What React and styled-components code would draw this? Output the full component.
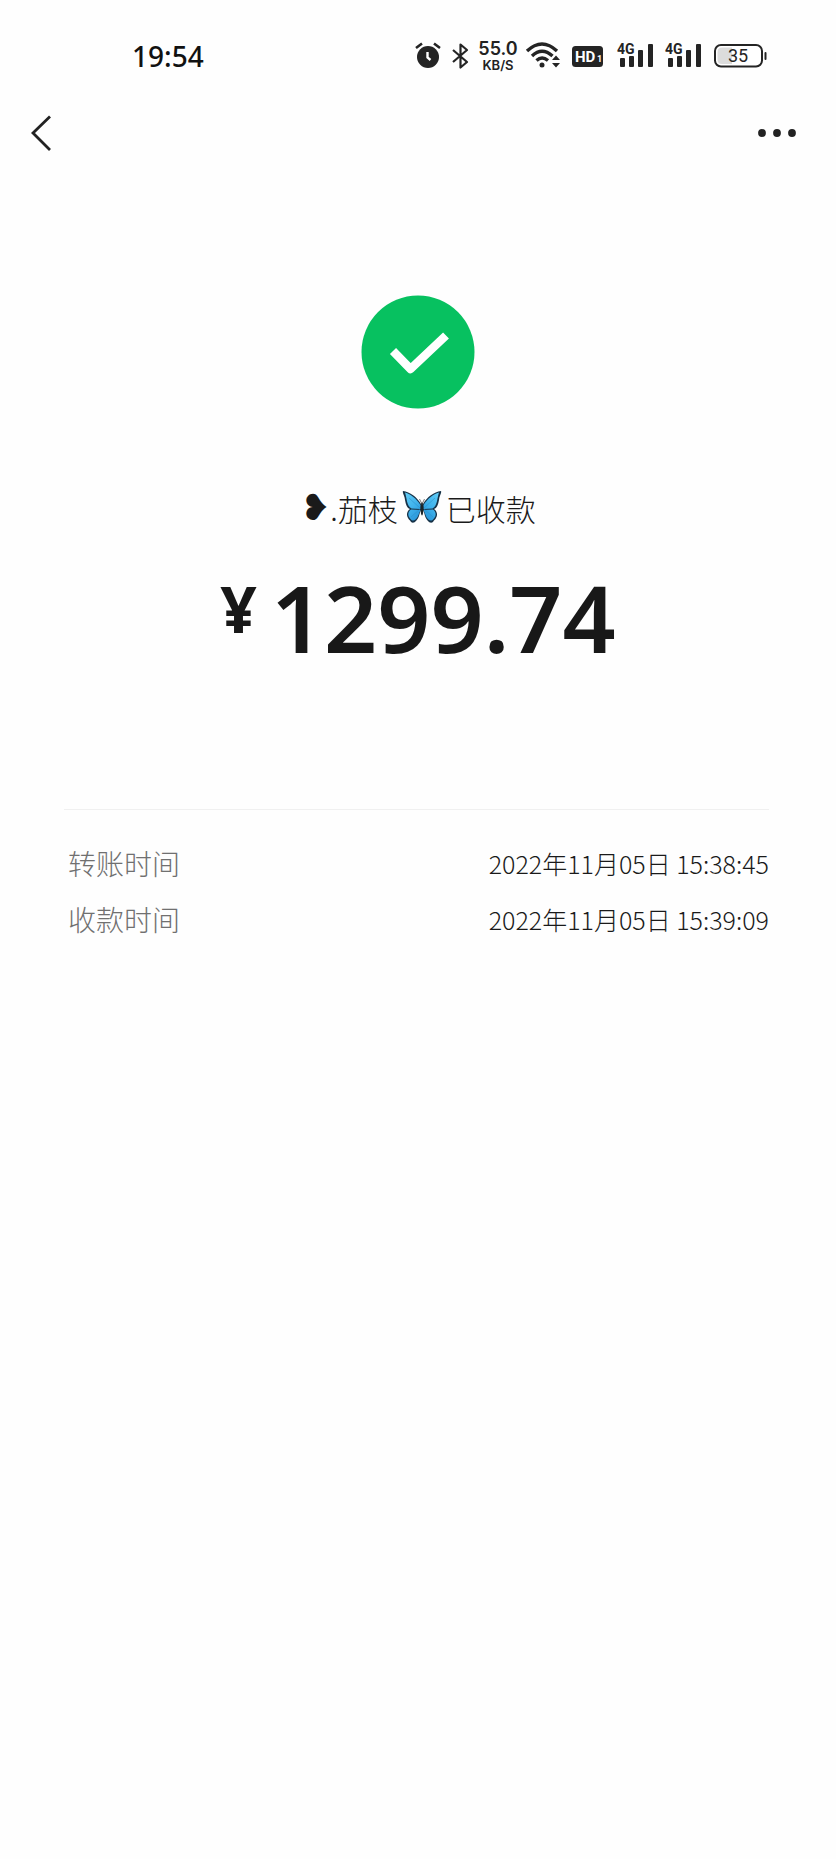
import React from 'react';
import styled, { createGlobalStyle } from 'styled-components';

const GlobalStyle = createGlobalStyle`
  * { box-sizing: border-box; }
  body {
    margin: 0;
    background: #fefefe;
    color: #1a1a1a;
    font-family: "Noto Sans CJK SC", sans-serif;
  }
`;

const Page = styled.div`
  min-height: 100vh;
  display: flex;
  flex-direction: column;
`;

const StatusBar = styled.header`
  display: flex;
  align-items: center;
  justify-content: space-between;
  height: 80px;
  padding: 32px 69px 0 132px;
`;

const Clock = styled.time`
  font: 500 28px/32px "Noto Sans", sans-serif;
  color: #111;
`;

const StatusIcons = styled.div`
  display: flex;
  align-items: center;
  gap: 10px;
`;

const StatusIcon = styled.svg`
  display: block;
  height: 32px;
  color: #242424;
  overflow: visible;
`;

const Speed = styled.div`
  width: 38px;
  display: flex;
  flex-direction: column;
  align-items: center;
  font-family: Inter, sans-serif;
  font-weight: 600;
  color: #222;
`;

const SpeedValue = styled.span`
  font-size: 18px;
  line-height: 18px;
`;

const SpeedUnit = styled.span`
  font-size: 13px;
  line-height: 14px;
`;

const NavBar = styled.nav`
  display: flex;
  align-items: center;
  justify-content: space-between;
  height: 106px;
  padding: 0 37px 0 28px;
`;

const NavButton = styled.button`
  display: flex;
  padding: 0;
  border: 0;
  background: none;
  color: #222;
`;

const Result = styled.main`
  display: flex;
  flex-direction: column;
  align-items: center;
  padding-top: 109px;
`;

const Receiver = styled.p`
  display: flex;
  align-items: center;
  gap: 4px;
  margin: 75px 0 0;
  font-size: 30px;
  font-weight: 300;
  line-height: 48px;
`;

const Bullet = styled.span`
  font-family: "DejaVu Sans", sans-serif;
  font-size: 36px;
  font-weight: 400;
  line-height: 40px;
`;

const Name = styled.span`
  display: flex;
  align-items: center;
`;

const Amount = styled.p`
  display: flex;
  align-items: flex-start;
  gap: 14px;
  margin: 35px 0 0;
  font: 600 93px/100px "Noto Sans", sans-serif;
  color: #181818;
`;

const Currency = styled.span`
  font-size: 64px;
  font-weight: 700;
  line-height: 84px;
`;

const Details = styled.dl`
  margin: 142px 67px 0 64px;
  padding: 25px 0 0 4px;
  border-top: 1px solid #f0f0f0;
`;

const DetailRow = styled.div`
  display: flex;
  align-items: center;
  justify-content: space-between;
  height: 56px;
`;

const Label = styled.dt`
  font-size: 28px;
  font-weight: 300;
  color: #707070;
`;

const Value = styled.dd`
  margin: 0;
  font-size: 25px;
  font-weight: 300;
  color: #1a1a1a;
`;

const AlarmIcon = () => (
  <StatusIcon width="26" viewBox="0 0 26 32">
    <circle cx="13" cy="17" r="11" fill="currentColor" />
    <path d="M1 8 L7 3.500 M25 8 L19 3.500" stroke="currentColor" strokeWidth="2.6" />
    <path d="M12.5 12 V17.5 L15.5 20" stroke="#fff" strokeWidth="2.4" fill="none" />
  </StatusIcon>
);

const BluetoothIcon = () => (
  <StatusIcon width="18" viewBox="0 0 18 32">
    <path
      d="M2 10 L16 22 L9.5 27.5 V4.500 L16 10 L2 22"
      fill="none"
      stroke="currentColor"
      strokeWidth="2.2"
      strokeLinejoin="round"
    />
  </StatusIcon>
);

const WifiIcon = () => (
  <StatusIcon width="36" viewBox="0 0 36 32">
    <g fill="none" stroke="currentColor" strokeWidth="3.400">
      <path d="M0 11 Q15 -3 30 11" />
      <path d="M5 16 Q15 6.500 25.500 16" />
      <path d="M9.500 20.500 Q15 15.500 21 20.500" />
    </g>
    <circle cx="15" cy="25" r="2.500" fill="currentColor" />
    <path d="M25 20 L29 15.500 L33 20 Z M25 23 L29 27.500 L33 23 Z" fill="currentColor" />
  </StatusIcon>
);

const HdIcon = () => (
  <StatusIcon width="34" viewBox="0 0 34 32">
    <rect x="-1" y="6" width="31" height="21" rx="3.500" fill="currentColor" />
    <text x="2" y="22" fill="#fff" fontFamily="Roboto, sans-serif" fontWeight="700" fontSize="15">HD</text>
    <text x="24" y="22" fill="#fff" fontFamily="Roboto, sans-serif" fontWeight="700" fontSize="9">1</text>
  </StatusIcon>
);

const SignalIcon = () => (
  <StatusIcon width="38" viewBox="0 0 38 32">
    <text x="0" y="14" fill="currentColor" fontFamily="Roboto, sans-serif" fontWeight="700" fontSize="14">4G</text>
    <g fill="currentColor">
      <rect x="3" y="18" width="5" height="9" rx="1" />
      <rect x="12" y="16" width="5" height="11" rx="1" />
      <rect x="21" y="10" width="5" height="17" rx="1" />
      <rect x="31" y="4" width="5" height="23" rx="1" />
    </g>
  </StatusIcon>
);

const BatteryIcon = () => (
  <StatusIcon width="54" viewBox="0 0 54 32">
    <rect x="2" y="5" width="47" height="21.500" rx="6" fill="#fff" stroke="currentColor" strokeWidth="2" />
    <path d="M9 7.500 H19 V24 H9 Q4.500 24 4.500 19.500 V12 Q4.500 7.500 9 7.500 Z" fill="#dcdcdc" />
    <rect x="51.500" y="12" width="2" height="8" rx="1" fill="currentColor" />
    <text x="25" y="22" textAnchor="middle" fill="currentColor" fontFamily="Roboto, sans-serif" fontSize="18">35</text>
  </StatusIcon>
);

const BackIcon = () => (
  <svg width="28" height="40" viewBox="0 0 28 40">
    <path d="M22 3.500 L5 20 L22 37" fill="none" stroke="currentColor" strokeWidth="2.800" />
  </svg>
);

const MoreIcon = () => (
  <svg width="44" height="12" viewBox="0 0 44 12" fill="currentColor">
    <circle cx="7" cy="6" r="3.900" />
    <circle cx="22" cy="6" r="3.900" />
    <circle cx="37" cy="6" r="3.900" />
  </svg>
);

const SuccessIcon = () => (
  <svg width="114" height="114" viewBox="0 0 114 114" role="img" aria-label="成功">
    <circle cx="57" cy="57" r="56.500" fill="#07c160" />
    <path
      d="M32 56 L49.500 74 L85 40.500"
      fill="none"
      stroke="#fff"
      strokeWidth="8.500"
      strokeLinejoin="round"
    />
  </svg>
);

const Wing = () => (
  <>
    <path
      d="M19 14 C15 7 8 2 1 1 C0 3 3 6 3 10 C4 15 5 18 8 19 C5 21 4 25 6 28 C7 30 8 30 9 32 C12 34 15 31 17 26 Q18 22 19 20 Z"
      fill="#173247"
    />
    <path
      d="M18.500 15 C14 8 9 4.500 3 2.500 C5 8 4.500 16 9.500 18.500 L18.500 19 Z M18.500 20 L9 19.500 C5.500 22 5.500 26 8.500 29 C12 33 15.500 28 16.500 25 Z"
      fill="url(#wing)"
    />
    <path d="M18 18 L7 8 M18 19 L9 27" stroke="#2a8dc6" strokeWidth="0.500" />
  </>
);

const ButterflyIcon = () => (
  <svg width="40" height="36" viewBox="0 0 40 36" role="img" aria-label="蝴蝶">
    <defs>
      <linearGradient id="wing" x1="0" y1="0" x2="0.600" y2="1">
        <stop offset="0" stopColor="#62cdf6" />
        <stop offset="0.600" stopColor="#3fb2ec" />
        <stop offset="1" stopColor="#2b98da" />
      </linearGradient>
    </defs>
    <Wing />
    <g transform="translate(40 0) scale(-1 1)">
      <Wing />
    </g>
    <path d="M20 14 L17.500 9 M20 14 L22.500 9" stroke="#222" strokeWidth="0.600" />
    <ellipse cx="20" cy="19" rx="1.400" ry="6.500" fill="#1c2529" />
  </svg>
);

const details = [
  ['转账时间', '2022年11月05日 15:38:45'],
  ['收款时间', '2022年11月05日 15:39:09'],
];

export default function App() {
  return (
    <Page>
      <GlobalStyle />
      <StatusBar>
        <Clock>19:54</Clock>
        <StatusIcons>
          <AlarmIcon />
          <BluetoothIcon />
          <Speed>
            <SpeedValue>55.0</SpeedValue>
            <SpeedUnit>KB/S</SpeedUnit>
          </Speed>
          <WifiIcon />
          <HdIcon />
          <SignalIcon />
          <SignalIcon />
          <BatteryIcon />
        </StatusIcons>
      </StatusBar>
      <NavBar>
        <NavButton aria-label="返回">
          <BackIcon />
        </NavButton>
        <NavButton aria-label="更多">
          <MoreIcon />
        </NavButton>
      </NavBar>
      <Result>
        <SuccessIcon />
        <Receiver>
          <Name>
            <Bullet>❥</Bullet>.茄枝
          </Name>
          <ButterflyIcon />
          <span>已收款</span>
        </Receiver>
        <Amount>
          <Currency>¥</Currency>
          <span>1299.74</span>
        </Amount>
      </Result>
      <Details>
        {details.map(([label, value]) => (
          <DetailRow key={label}>
            <Label>{label}</Label>
            <Value>{value}</Value>
          </DetailRow>
        ))}
      </Details>
    </Page>
  );
}
